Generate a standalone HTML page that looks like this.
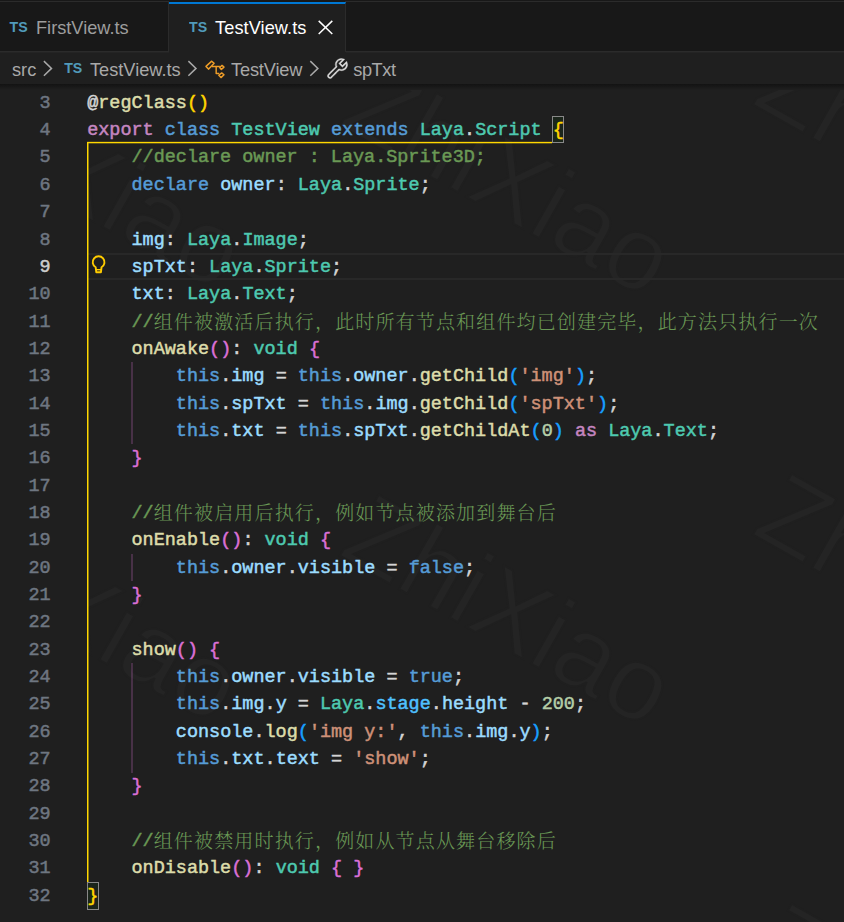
<!DOCTYPE html>
<html lang="zh-CN">
<head>
<meta charset="utf-8">
<title>TestView.ts</title>
<style>
html,body{margin:0;padding:0}
body{width:844px;height:922px;overflow:hidden;background:#1f1f1f;position:relative;font-family:"Liberation Sans","Noto Sans CJK SC",sans-serif;color:#cccccc}
#top0{position:absolute;left:0;top:0;width:844px;height:1px;background:#181818}
#top1{position:absolute;left:0;top:1px;width:844px;height:1px;background:#2b2b2b}
#tabs{position:absolute;left:0;top:2px;width:844px;height:49px;background:#181818;border-bottom:1.4px solid #2b2b2b}
.tab{position:absolute;top:0;height:49px;box-sizing:border-box}
#tab1{left:0;width:169px;border-right:1px solid #2b2b2b}
#tab2{left:169px;width:177px;height:50.4px;background:#1f1f1f;border-top:2px solid #0078d4;border-right:1px solid #2b2b2b}
.ui{position:absolute;white-space:nowrap;font-size:18.2px;line-height:22px}
.ts{position:absolute;white-space:nowrap;font-weight:bold;color:#519aba;font-size:14.2px;line-height:14px;transform-origin:0 0;transform:scale(1,1.07)}
#crumbs{position:absolute;left:0;top:52.4px;width:844px;height:31.6px}
#crumbs .ui{color:#a9a9a9}
svg{position:absolute;overflow:visible}
#shadow{position:absolute;left:0;top:84px;width:844px;height:6px;background:linear-gradient(#131313 0,#151515 1.2px,#181818 2.6px,#1b1b1b 4px,#1f1f1f 6px)}
#editor{position:absolute;left:0;top:0;width:844px;height:922px;font-family:"Liberation Mono", "Noto Serif CJK SC", monospace;font-size:18.47px;line-height:27.34px;-webkit-text-stroke:0.5px}
.ln{position:absolute;left:0;width:50.7px;height:27.34px;text-align:right;color:#6e7681;white-space:pre}
.ln.cur{color:#cccccc}
.cl{position:absolute;left:0;height:27.34px;white-space:pre}
.cl span{position:absolute;top:0;white-space:pre}
.cj{font-family:"Noto Serif CJK SC","Noto Sans CJK SC",serif;font-size:19px;letter-spacing:1.16px;margin-top:-2px;color:#6a9955;-webkit-text-stroke:0;font-weight:300}
.d{color:#d4d4d4}
.k{color:#569cd6}
.c{color:#c586c0}
.t{color:#4ec9b0}
.f{color:#dcdcaa}
.v{color:#9cdcfe}
.s{color:#ce9178}
.n{color:#b5cea8}
.m{color:#6a9955}
.b1{color:#ffd700}
.b2{color:#da70d6}
.b3{color:#179fff}
.K{color:#4fc1ff}
.g{position:absolute}
</style>
</head>
<body>
<svg id="wm" width="844" height="922" viewBox="0 0 844 922" style="left:0;top:0" font-family="'Liberation Sans',sans-serif" font-size="105" fill="#242424" stroke="#1f1f1f" stroke-width="2">
<defs><clipPath id="wc"><rect x="88" y="84" width="756" height="838"/></clipPath></defs>
<g clip-path="url(#wc)">
<text transform="translate(337,124) rotate(29.5)">ZhiXiao</text>
<text transform="translate(750,103) rotate(29.5)">ZhiXiao</text>
<text transform="translate(337,554) rotate(29.5)">ZhiXiao</text>
<text transform="translate(750,533) rotate(29.5)">ZhiXiao</text>
<text transform="translate(750,963) rotate(29.5)">ZhiXiao</text>
<text transform="translate(-92,117) rotate(29.5)">ZhiXiao</text>
<text transform="translate(-95,550) rotate(29.5)">ZhiXiao</text>
</g>
</svg>
<div id="top0"></div><div id="top1"></div><div class="g" style="left:169px;top:1px;width:176px;height:1px;background:#181818"></div>
<div id="tabs">
  <div class="tab" id="tab1">
    <span class="ts" style="left:9.6px;top:17px">TS</span>
    <span class="ui" style="left:36px;top:14.5px;color:#9d9d9d">FirstView.ts</span>
  </div>
  <div class="tab" id="tab2">
    <span class="ts" style="left:20.1px;top:15.2px">TS</span>
    <span class="ui" style="left:46.1px;top:12.5px;color:#ffffff;letter-spacing:0.06px">TestView.ts</span>
    <svg style="left:0;top:0" width="176" height="50" viewBox="169 4 176 50" fill="none" stroke="#ffffff" stroke-width="1.5"><path d="M318.7 20.9L332.3 34M332.3 20.9L318.7 34"/></svg>
  </div>
</div>
<div class="g" style="left:0;top:52px;width:169px;height:1px;background:#242424"></div><div class="g" style="left:346px;top:52px;width:498px;height:1px;background:#242424"></div>
<div id="crumbs">
  <span class="ui" style="left:12px;top:6.6px">src</span>
  <svg style="left:0;top:0" width="844" height="32" viewBox="0 52.2 844 32" fill="none" stroke="#a9a9a9" stroke-width="1.5"><path d="M43.9 61.3L51.5 68.6L43.9 75.9"/></svg>
  <span class="ts" style="left:64.2px;top:7.6px">TS</span>
  <span class="ui" style="left:90px;top:6.6px">TestView.ts</span>
  <svg style="left:0;top:0" width="844" height="32" viewBox="0 52.2 844 32" fill="none" stroke="#a9a9a9" stroke-width="1.5"><path d="M188.4 61.3L196.0 68.6L188.4 75.9"/></svg>
  <svg style="left:0;top:0" width="844" height="32" viewBox="0 51.7 844 32" fill="none" stroke="#ee9d28" stroke-width="1.45" stroke-linejoin="round"><path d="M205.97 66.1L211.73 60.86L214.11 63.07L208.71 68.82Z"/><path d="M211.7 66.1H219.9M216.17 66.1V73.2H219.2"/><path d="M219.7 67.15L222.04 65.1L224 66.8L221.33 69.2Z"/><path d="M218.8 74.97L221.68 72.6L224 74.44L220.97 77.3Z"/></svg>
  <span class="ui" style="left:231px;top:6.6px;letter-spacing:-0.15px">TestView</span>
  <svg style="left:0;top:0" width="844" height="32" viewBox="0 52.2 844 32" fill="none" stroke="#a9a9a9" stroke-width="1.5"><path d="M310.3 61.3L317.9 68.6L310.3 75.9"/></svg>
  <svg style="left:325.5px;top:4.5px" width="23" height="23" viewBox="0 0 16 16" fill="#dcdcdc" stroke="#dcdcdc" stroke-width="0.25"><path d="M2.807 14.975a1.75 1.75 0 0 1-1.255-.556 1.684 1.684 0 0 1-.544-1.1A1.72 1.72 0 0 1 1.36 12.1c1.208-1.27 3.587-3.65 5.318-5.345a4.257 4.257 0 0 1 .048-3.078 4.095 4.095 0 0 1 1.665-1.969 4.259 4.259 0 0 1 4.04-.36l.617.268-2.866 2.951 1.255 1.259 2.944-2.877.267.619a4.295 4.295 0 0 1 .04 3.311 4.198 4.198 0 0 1-.923 1.392 4.27 4.27 0 0 1-.743.581 4.217 4.217 0 0 1-3.812.446c-1.098 1.112-3.84 3.872-5.32 5.254a1.63 1.63 0 0 1-1.084.423zm7.938-13.047a3.32 3.32 0 0 0-1.849.557c-.213.13-.412.284-.591.458a3.321 3.321 0 0 0-.657 3.733l.135.297-.233.227c-1.738 1.697-4.269 4.22-5.485 5.504a.805.805 0 0 0 .132 1.05.911.911 0 0 0 .298.22c.1.044.209.069.319.072a.694.694 0 0 0 .45-.181c1.573-1.469 4.612-4.539 5.504-5.44l.23-.232.294.135a3.286 3.286 0 0 0 3.225-.254 3.33 3.33 0 0 0 .591-.464 3.28 3.28 0 0 0 .964-2.358c0-.215-.021-.43-.064-.642L11.43 7.125 8.879 4.578l2.515-2.59a3.286 3.286 0 0 0-.65-.06z"/></svg>
  <span class="ui" style="left:353.3px;top:6.6px;letter-spacing:-0.45px">spTxt</span>
</div>
<div id="editor">
  <!-- current line highlight -->
  <div class="g" style="left:87px;top:253px;width:757px;height:2px;background:#282828"></div>
  <div class="g" style="left:87px;top:278px;width:757px;height:2px;background:#282828"></div>
  <!-- bracket pair guides -->
  <div class="g" style="left:87px;top:143px;width:1px;height:739px;background:#ffd700"></div>
  <div class="g" style="left:88px;top:143px;width:1px;height:739px;background:rgba(255,215,0,.5)"></div>
  <div class="g" style="left:87px;top:142px;width:465px;height:1px;background:#ffd700"></div>
  <div class="g" style="left:87px;top:141px;width:465px;height:1px;background:rgba(255,215,0,.15)"></div>
  <div class="g" style="left:87px;top:143px;width:465px;height:1px;background:rgba(255,215,0,.3)"></div>
  <div class="g" style="left:131px;top:362px;width:2px;height:82px;background:rgba(218,112,214,.22)"></div>
  <div class="g" style="left:131px;top:554px;width:2px;height:27px;background:rgba(218,112,214,.22)"></div>
  <div class="g" style="left:131px;top:663px;width:2px;height:110px;background:rgba(218,112,214,.22)"></div>
  <!-- bracket match boxes -->
  <div class="g" style="left:552px;top:116px;width:12px;height:27px;box-sizing:border-box;border:1px solid #888888;background:rgba(0,100,0,.1)"></div>
  <div class="g" style="left:87px;top:882px;width:12px;height:28px;box-sizing:border-box;border:1px solid #888888;background:rgba(0,100,0,.1)"></div>
  <!-- lightbulb -->
  <svg style="left:0;top:0" width="844" height="922" viewBox="0 0 844 922" fill="none" stroke="#ffcc00" stroke-width="1.9" stroke-linejoin="round"><path d="M95.65 267.2A5.9 5.9 0 1 1 101.55 267.2L100.9 272.3H96.3Z"/><path d="M96 269.7H101.2" stroke-width="1.4"/></svg>
<div class="ln" style="top:89.8px">3</div>
<div class="cl" style="top:89.8px"><span class="d" style="left:87.2px">@</span><span class="f" style="left:98.28px">regClass</span><span class="b1" style="left:186.96px">()</span></div>
<div class="ln" style="top:117.14px">4</div>
<div class="cl" style="top:117.14px"><span class="c" style="left:87.2px">export</span><span class="k" style="left:164.79px">class</span><span class="t" style="left:231.29px">TestView</span><span class="k" style="left:331.05px">extends</span><span class="t" style="left:419.72px">Laya</span><span class="d" style="left:464.06px">.</span><span class="t" style="left:475.14px">Script</span><span class="b1" style="left:552.73px">{</span></div>
<div class="ln" style="top:144.49px">5</div>
<div class="cl" style="top:144.49px"><span class="m" style="left:131.54px">//declare owner : Laya.Sprite3D;</span></div>
<div class="ln" style="top:171.83px">6</div>
<div class="cl" style="top:171.83px"><span class="k" style="left:131.54px">declare</span><span class="v" style="left:220.21px">owner</span><span class="d" style="left:275.63px">:</span><span class="t" style="left:297.8px">Laya</span><span class="d" style="left:342.13px">.</span><span class="t" style="left:353.22px">Sprite</span><span class="d" style="left:419.72px">;</span></div>
<div class="ln" style="top:199.18px">7</div>
<div class="ln" style="top:226.52px">8</div>
<div class="cl" style="top:226.52px"><span class="v" style="left:131.54px">img</span><span class="d" style="left:164.79px">:</span><span class="t" style="left:186.96px">Laya</span><span class="d" style="left:231.29px">.</span><span class="t" style="left:242.38px">Image</span><span class="d" style="left:297.8px">;</span></div>
<div class="ln cur" style="top:253.87px">9</div>
<div class="cl" style="top:253.87px"><span class="v" style="left:131.54px">spTxt</span><span class="d" style="left:186.96px">:</span><span class="t" style="left:209.12px">Laya</span><span class="d" style="left:253.46px">.</span><span class="t" style="left:264.54px">Sprite</span><span class="d" style="left:331.05px">;</span></div>
<div class="ln" style="top:281.21px">10</div>
<div class="cl" style="top:281.21px"><span class="v" style="left:131.54px">txt</span><span class="d" style="left:164.79px">:</span><span class="t" style="left:186.96px">Laya</span><span class="d" style="left:231.29px">.</span><span class="t" style="left:242.38px">Text</span><span class="d" style="left:286.71px">;</span></div>
<div class="ln" style="top:308.56px">11</div>
<div class="cl" style="top:308.56px"><span class="m" style="left:131.54px">//</span><span class="cj" style="left:153.7px;width:665.28px">组件被激活后执行，此时所有节点和组件均已创建完毕，此方法只执行一次</span></div>
<div class="ln" style="top:335.9px">12</div>
<div class="cl" style="top:335.9px"><span class="f" style="left:131.54px">onAwake</span><span class="b2" style="left:209.12px">()</span><span class="d" style="left:231.29px">:</span><span class="t" style="left:253.46px">void</span><span class="b2" style="left:308.88px">{</span></div>
<div class="ln" style="top:363.25px">13</div>
<div class="cl" style="top:363.25px"><span class="k" style="left:175.87px">this</span><span class="d" style="left:220.21px">.</span><span class="v" style="left:231.29px">img</span><span class="d" style="left:275.63px">=</span><span class="k" style="left:297.8px">this</span><span class="d" style="left:342.13px">.</span><span class="v" style="left:353.22px">owner</span><span class="d" style="left:408.64px">.</span><span class="f" style="left:419.72px">getChild</span><span class="b3" style="left:508.39px">(</span><span class="s" style="left:519.48px">'img'</span><span class="b3" style="left:574.9px">)</span><span class="d" style="left:585.98px">;</span></div>
<div class="ln" style="top:390.59px">14</div>
<div class="cl" style="top:390.59px"><span class="k" style="left:175.87px">this</span><span class="d" style="left:220.21px">.</span><span class="v" style="left:231.29px">spTxt</span><span class="d" style="left:297.8px">=</span><span class="k" style="left:319.96px">this</span><span class="d" style="left:364.3px">.</span><span class="v" style="left:375.38px">img</span><span class="d" style="left:408.64px">.</span><span class="f" style="left:419.72px">getChild</span><span class="b3" style="left:508.39px">(</span><span class="s" style="left:519.48px">'spTxt'</span><span class="b3" style="left:597.06px">)</span><span class="d" style="left:608.15px">;</span></div>
<div class="ln" style="top:417.94px">15</div>
<div class="cl" style="top:417.94px"><span class="k" style="left:175.87px">this</span><span class="d" style="left:220.21px">.</span><span class="v" style="left:231.29px">txt</span><span class="d" style="left:275.63px">=</span><span class="k" style="left:297.8px">this</span><span class="d" style="left:342.13px">.</span><span class="v" style="left:353.22px">spTxt</span><span class="d" style="left:408.64px">.</span><span class="f" style="left:419.72px">getChildAt</span><span class="b3" style="left:530.56px">(</span><span class="n" style="left:541.64px">0</span><span class="b3" style="left:552.73px">)</span><span class="c" style="left:574.9px">as</span><span class="t" style="left:608.15px">Laya</span><span class="d" style="left:652.48px">.</span><span class="t" style="left:663.57px">Text</span><span class="d" style="left:707.9px">;</span></div>
<div class="ln" style="top:445.29px">16</div>
<div class="cl" style="top:445.29px"><span class="b2" style="left:131.54px">}</span></div>
<div class="ln" style="top:472.63px">17</div>
<div class="ln" style="top:499.97px">18</div>
<div class="cl" style="top:499.97px"><span class="m" style="left:131.54px">//</span><span class="cj" style="left:153.7px;width:403.2px">组件被启用后执行，例如节点被添加到舞台后</span></div>
<div class="ln" style="top:527.32px">19</div>
<div class="cl" style="top:527.32px"><span class="f" style="left:131.54px">onEnable</span><span class="b2" style="left:220.21px">()</span><span class="d" style="left:242.38px">:</span><span class="t" style="left:264.54px">void</span><span class="b2" style="left:319.96px">{</span></div>
<div class="ln" style="top:554.67px">20</div>
<div class="cl" style="top:554.67px"><span class="k" style="left:175.87px">this</span><span class="d" style="left:220.21px">.</span><span class="v" style="left:231.29px">owner</span><span class="d" style="left:286.71px">.</span><span class="v" style="left:297.8px">visible</span><span class="d" style="left:386.47px">=</span><span class="k" style="left:408.64px">false</span><span class="d" style="left:464.06px">;</span></div>
<div class="ln" style="top:582.01px">21</div>
<div class="cl" style="top:582.01px"><span class="b2" style="left:131.54px">}</span></div>
<div class="ln" style="top:609.36px">22</div>
<div class="ln" style="top:636.7px">23</div>
<div class="cl" style="top:636.7px"><span class="f" style="left:131.54px">show</span><span class="b2" style="left:175.87px">()</span><span class="b2" style="left:209.12px">{</span></div>
<div class="ln" style="top:664.05px">24</div>
<div class="cl" style="top:664.05px"><span class="k" style="left:175.87px">this</span><span class="d" style="left:220.21px">.</span><span class="v" style="left:231.29px">owner</span><span class="d" style="left:286.71px">.</span><span class="v" style="left:297.8px">visible</span><span class="d" style="left:386.47px">=</span><span class="k" style="left:408.64px">true</span><span class="d" style="left:452.97px">;</span></div>
<div class="ln" style="top:691.39px">25</div>
<div class="cl" style="top:691.39px"><span class="k" style="left:175.87px">this</span><span class="d" style="left:220.21px">.</span><span class="v" style="left:231.29px">img</span><span class="d" style="left:264.54px">.</span><span class="v" style="left:275.63px">y</span><span class="d" style="left:297.8px">=</span><span class="t" style="left:319.96px">Laya</span><span class="d" style="left:364.3px">.</span><span class="K" style="left:375.38px">stage</span><span class="d" style="left:430.8px">.</span><span class="v" style="left:441.89px">height</span><span class="d" style="left:519.48px">-</span><span class="n" style="left:541.64px">200</span><span class="d" style="left:574.9px">;</span></div>
<div class="ln" style="top:718.74px">26</div>
<div class="cl" style="top:718.74px"><span class="v" style="left:175.87px">console</span><span class="d" style="left:253.46px">.</span><span class="f" style="left:264.54px">log</span><span class="b3" style="left:297.8px">(</span><span class="s" style="left:308.88px">'img y:'</span><span class="d" style="left:397.55px">,</span><span class="k" style="left:419.72px">this</span><span class="d" style="left:464.06px">.</span><span class="v" style="left:475.14px">img</span><span class="d" style="left:508.39px">.</span><span class="v" style="left:519.48px">y</span><span class="b3" style="left:530.56px">)</span><span class="d" style="left:541.64px">;</span></div>
<div class="ln" style="top:746.08px">27</div>
<div class="cl" style="top:746.08px"><span class="k" style="left:175.87px">this</span><span class="d" style="left:220.21px">.</span><span class="v" style="left:231.29px">txt</span><span class="d" style="left:264.54px">.</span><span class="v" style="left:275.63px">text</span><span class="d" style="left:331.05px">=</span><span class="s" style="left:353.22px">'show'</span><span class="d" style="left:419.72px">;</span></div>
<div class="ln" style="top:773.43px">28</div>
<div class="cl" style="top:773.43px"><span class="b2" style="left:131.54px">}</span></div>
<div class="ln" style="top:800.77px">29</div>
<div class="ln" style="top:828.12px">30</div>
<div class="cl" style="top:828.12px"><span class="m" style="left:131.54px">//</span><span class="cj" style="left:153.7px;width:403.2px">组件被禁用时执行，例如从节点从舞台移除后</span></div>
<div class="ln" style="top:855.46px">31</div>
<div class="cl" style="top:855.46px"><span class="f" style="left:131.54px">onDisable</span><span class="b2" style="left:231.29px">()</span><span class="d" style="left:253.46px">:</span><span class="t" style="left:275.63px">void</span><span class="b2" style="left:331.05px">{</span><span class="b2" style="left:353.22px">}</span></div>
<div class="ln" style="top:882.81px">32</div>
<div class="cl" style="top:882.81px"><span class="b1" style="left:87.2px">}</span></div>
</div>
<div id="shadow"></div>
</body>
</html>
